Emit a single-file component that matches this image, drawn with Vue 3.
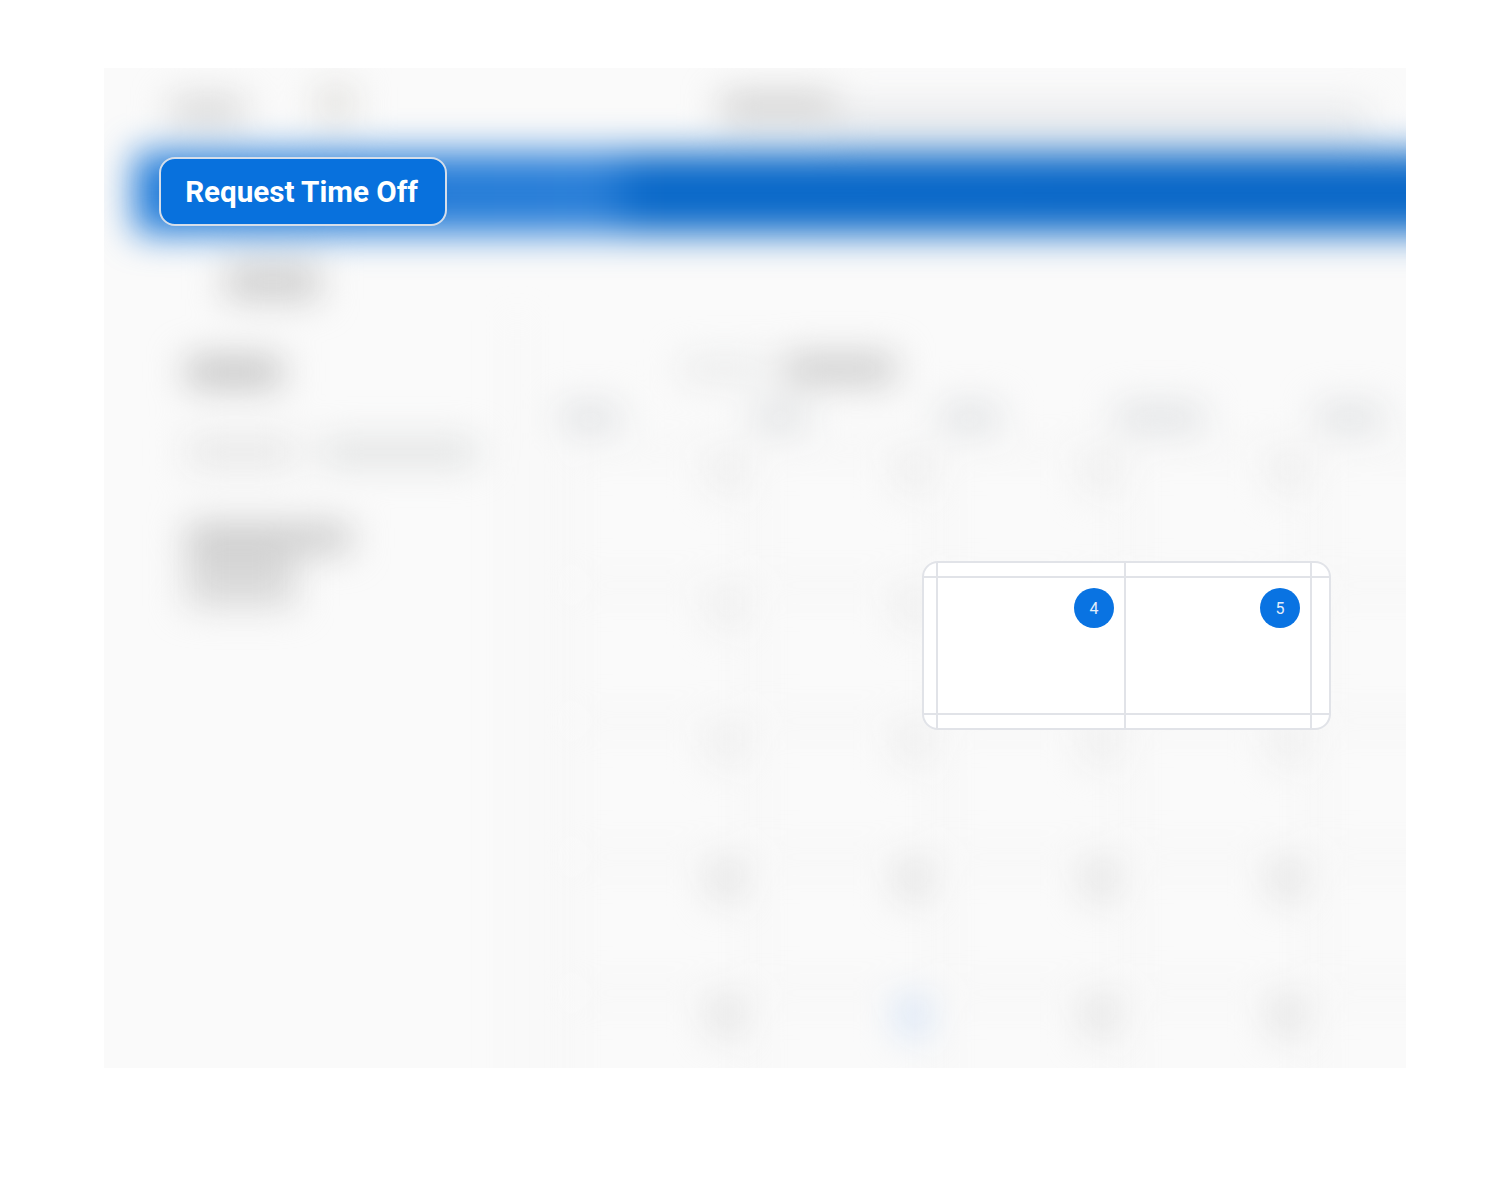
<script setup>
const dayHeads = [
  { id: 'a', cls: 'w65' },
  { id: 'b', cls: 'w55' },
  { id: 'c', cls: 'w60' },
  { id: 'd', cls: 'w90' },
  { id: 'e', cls: 'w70' }
]
const cells = []
for (let r = 0; r < 5; r++) {
  for (let c = 0; c < 5; c++) {
    cells.push({ id: `${r}-${c}`, accent: r === 4 && c === 1, strong: r >= 3 })
  }
}
</script>

<template>
  <div class="page">
    <section class="stage">
      <div class="backdrop" aria-hidden="true">
        <div class="topbar">
          <i class="blob brand"></i>
          <i class="blob menu"></i>
          <i class="blob crumb"></i>
          <i class="blob band"></i>
        </div>
        <div class="bluebar"></div>
        <i class="blob subline"></i>
        <div class="body">
          <aside class="side">
            <i class="blob s-title"></i>
            <div class="s-row">
              <i class="blob s-a"></i>
              <i class="blob s-b"></i>
            </div>
            <i class="blob s-c"></i>
            <i class="blob s-d"></i>
          </aside>
          <main class="cal">
            <div class="tabs">
              <i class="blob t-a"></i>
              <i class="blob t-b"></i>
            </div>
            <div class="heads">
              <div v-for="h in dayHeads" :key="h.id" class="head">
                <i class="blob h-blob" :class="h.cls"></i>
              </div>
            </div>
            <div class="days">
              <div v-for="c in cells" :key="c.id" class="day">
                <i class="blob date" :class="{ accent: c.accent, strong: c.strong }"></i>
              </div>
            </div>
          </main>
        </div>
      </div>

      <button class="request" type="button">Request Time Off</button>

      <div class="spot">
        <div class="sc"></div><div class="sc"></div><div class="sc"></div><div class="sc"></div>
        <div class="sc"></div>
        <div class="sc num"><span class="badge">4</span></div>
        <div class="sc num"><span class="badge">5</span></div>
        <div class="sc"></div>
        <div class="sc"></div><div class="sc"></div><div class="sc"></div><div class="sc"></div>
      </div>
    </section>
  </div>
</template>

<style>
html, body { margin: 0; background: #fff; }
</style>

<style scoped>
.page {
  box-sizing: border-box;
  height: 1188px;
  padding: 68px 100px 120px 104px;
  background: #fff;
  font-family: Roboto, "Liberation Sans", sans-serif;
}
.stage {
  position: relative;
  height: 1000px;
  overflow: hidden;
  background: #fafafa;
}
.backdrop {
  position: absolute;
  inset: 0 -60px -60px 0;
  display: flex;
  flex-direction: column;
  filter: blur(18px);
}
.blob { display: block; background: #dcdcdc; flex: none; }

.topbar {
  height: 84px;
  box-sizing: border-box;
  padding-top: 30px;
  padding-left: 66px;
  display: flex;
  align-items: flex-start;
}
.brand { width: 75px; height: 24px; background: #d1d1d1; }
.menu { width: 37px; height: 34px; margin-left: 72px; margin-top: -12px; background: #dfdedb; }
.crumb { width: 115px; height: 22px; margin-left: 366px; margin-top: -2px; background: #c4c4c4; }
.band { width: 535px; height: 24px; margin-top: 10px; background: #e2e4e7; }

.bluebar {
  height: 82px;
  margin-left: 30px;
  border-radius: 8px 0 0 8px;
  background: linear-gradient(90deg, #1f7ad8 0, #2a7fd8 35%, #0a69c9 38%, #0a68c8 100%);
}
.subline { width: 95px; height: 36px; margin: 30px 0 0 121px; background: #cdcdcd; }

.body { display: flex; flex: 1; min-height: 0; margin-top: 21px; }
.side {
  width: 416px;
  flex: none;
  box-sizing: border-box;
  padding: 37px 0 0 82px;
  border-right: 5px solid #f5f5f5;
}
.s-title { width: 96px; height: 28px; background: #bebebe; }
.s-row { display: flex; margin-top: 50px; gap: 22px; }
.s-a { width: 112px; height: 32px; background: #e8e8e8; }
.s-b { width: 158px; height: 24px; margin-top: 4px; background: #dee0e0; }
.s-c { width: 165px; height: 28px; margin-top: 56px; background: #c8c8c8; }
.s-d { width: 110px; height: 52px; margin-top: 2px; background: #d8d8d8; }

.cal { flex: 1; min-width: 0; }
.tabs { display: flex; height: 32px; margin-top: 32px; padding-left: 160px; align-items: center; }
.t-a { width: 90px; height: 20px; background: #e7e8e8; }
.t-b { width: 112px; height: 28px; margin-left: 14px; background: #c9c9c9; }

.heads {
  display: grid;
  grid-template-columns: repeat(5, 190px);
  margin-top: 19px;
  margin-left: -25px;
  width: max-content;
}
.head { display: flex; justify-content: center; }
.h-blob { height: 26px; background: #dfe1e3; }
.w65 { width: 62px; }
.w55 { width: 56px; }
.w60 { width: 60px; }
.w90 { width: 88px; }
.w70 { width: 66px; }

.days {
  display: grid;
  grid-template-columns: repeat(5, 187px);
  grid-auto-rows: 136px;
  margin-top: 16px;
  margin-left: 43px;
  width: max-content;
}
.day {
  box-sizing: border-box;
  padding: 0 10px 0 0;
  display: flex;
  justify-content: flex-end;
  align-items: flex-start;
  border-top: 6px solid #f4f4f4;
  border-left: 6px solid #f4f4f4;
}
.date { width: 30px; height: 40px; background: #ececec; }
.date.strong { background: #e1e1e1; }
.date.accent { background: #d5e3f6; }

.request {
  position: absolute;
  left: 55px;
  top: 89px;
  width: 288px;
  height: 69px;
  box-sizing: border-box;
  border: 2px solid #d5deea;
  border-radius: 16px;
  background: #0871dd;
  color: #fff;
  font: 700 29.6px/1 Roboto, "Liberation Sans", sans-serif;
  padding: 2px 3px 0 0;
  text-align: center;
}

.spot {
  position: absolute;
  left: 818px;
  top: 493px;
  width: 409px;
  height: 169px;
  box-sizing: border-box;
  display: grid;
  grid-template-columns: 12px 186px 184px 17px;
  grid-template-rows: 13px 135px 13px;
  gap: 2px;
  background: #e1e3e8;
  border: 2px solid #e1e3e8;
  border-radius: 16px;
  overflow: hidden;
}
.sc { background: #fff; }
.num { display: flex; justify-content: flex-end; align-items: flex-start; padding: 10px 10px 0 0; }
.badge {
  box-sizing: border-box;
  width: 40px;
  height: 40px;
  padding-top: 1px;
  border-radius: 50%;
  background: #0973e2;
  color: #e4eefa;
  display: flex;
  align-items: center;
  justify-content: center;
  font: 400 16px/1 Roboto, "Liberation Sans", sans-serif;
}
</style>
